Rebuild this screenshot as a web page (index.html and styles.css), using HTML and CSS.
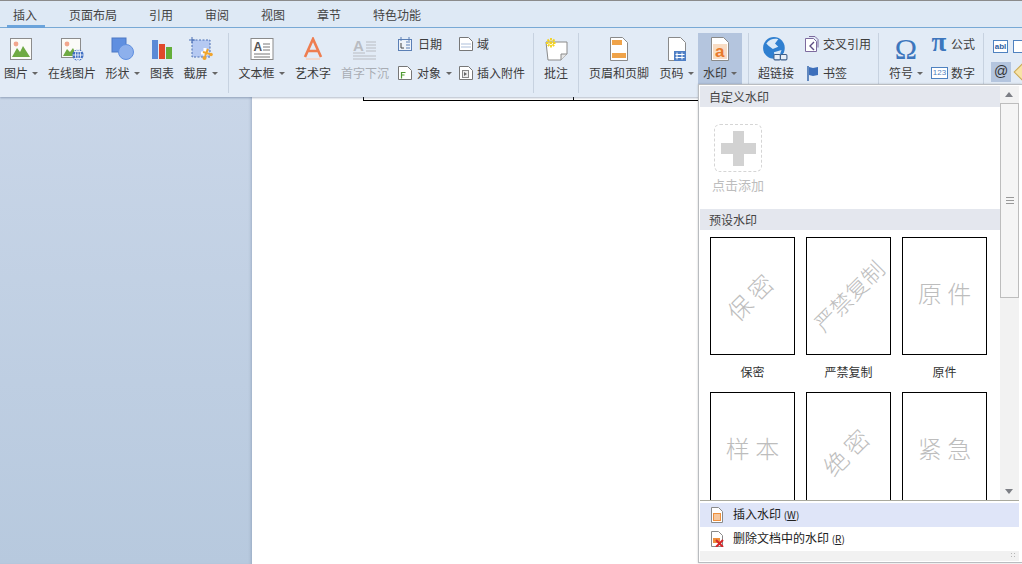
FILE: index.html
```html
<!DOCTYPE html>
<html lang="zh">
<head>
<meta charset="utf-8">
<title>插入水印</title>
<link rel="stylesheet" href="styles.css">
</head>
<body>
<div class="app">
  <nav class="tabs">
    <span class="tab active">插入</span><span class="tab">页面布局</span><span class="tab">引用</span><span class="tab">审阅</span><span class="tab">视图</span><span class="tab">章节</span><span class="tab">特色功能</span>
  </nav>
  <div class="ribbon">
    <div class="tool w42">
      <svg class="ico" viewBox="0 0 24 24"><rect x="1.500" y="1.500" width="21" height="21" fill="#fbfbf8" stroke="#8c8c8c"/><circle cx="7" cy="7" r="2.400" fill="#f2a78e"/><path d="M3 20l5-9 3 4 3-6 7 11z" fill="#6faa43"/></svg>
      <span class="lbl">图片<i class="arr"></i></span>
    </div>
    <div class="tool w60">
      <svg class="ico" viewBox="0 0 24 24"><rect x="1.500" y="1.500" width="19" height="19" fill="#fbfbf8" stroke="#8c8c8c"/><circle cx="7" cy="7" r="2.400" fill="#f2a78e"/><path d="M3 19l4-7 3 3 3-4 4 8z" fill="#6faa43"/><circle cx="18" cy="18" r="5.600" fill="#3f6fc4"/><path d="M12.500 18h11M18 12.500v11M14 14.500h8M14 21.500h8" stroke="#fff" stroke-width=".8"/><ellipse cx="18" cy="18" rx="2.600" ry="5.500" fill="none" stroke="#fff" stroke-width=".8"/></svg>
      <span class="lbl">在线图片</span>
    </div>
    <div class="tool w41">
      <svg class="ico" viewBox="0 0 24 24"><rect x="1" y="1" width="14" height="14" fill="#5f8fe0" stroke="#4c78c4"/><circle cx="15" cy="15" r="7.500" fill="#8db0ec" stroke="#5f8fe0"/></svg>
      <span class="lbl">形状<i class="arr"></i></span>
    </div>
    <div class="tool w38">
      <svg class="ico" viewBox="0 0 24 24"><rect x="2" y="3" width="6" height="19" fill="#5b8ad6"/><rect x="9" y="7" width="6" height="15" fill="#e0492c"/><rect x="16" y="10" width="6" height="12" fill="#63ae3a"/></svg>
      <span class="lbl">图表</span>
    </div>
    <div class="tool w39">
      <svg class="ico" viewBox="0 0 24 24"><rect x="3" y="3" width="18" height="17" fill="#b5c9f2" stroke="#4b6fb5" stroke-dasharray="2 1.500"/><path d="M3 0v6M0 3h6" stroke="#4b6fb5"/><path d="M16 11v8M12 16h8" stroke="#fff" stroke-width="3"/><path d="M19 12l-3 7M14 15l7 2" stroke="#f0a52e" stroke-width="2"/><circle cx="15.500" cy="21" r="2" fill="#f0a52e"/><circle cx="22" cy="17.500" r="1.800" fill="#f0a52e"/></svg>
      <span class="lbl">截屏<i class="arr"></i></span>
    </div>
    <div class="sep m-l8"></div>
    <div class="tool w65">
      <svg class="ico" viewBox="0 0 24 24"><rect x="1" y="1.500" width="22" height="21" fill="#fff" stroke="#8a8a8a"/><text class="ico-a" x="3.500" y="14">A</text><path d="M13 7h7M13 10h7M13 13h7M4 17h16M4 20h16" stroke="#777"/></svg>
      <span class="lbl">文本框<i class="arr"></i></span>
    </div>
    <div class="tool w38">
      <svg class="ico" viewBox="0 0 24 24"><path d="M4 20L12 2l8 18M7 14h10" fill="none" stroke="#ee7d50" stroke-width="2.600"/><path d="M5 22h14" stroke="#f5d0bf" stroke-width="1.500"/></svg>
      <span class="lbl">艺术字</span>
    </div>
    <div class="tool w66 dim">
      <svg class="ico" viewBox="0 0 24 24"><text class="ico-b" x="0" y="14">A</text><path d="M0 16h12M13 5h10M13 8h10M13 11h10M13 14h10M0 19h23M0 22h23" stroke="#b9bcc2"/></svg>
      <span class="lbl">首字下沉</span>
    </div>
    <div class="smalls w61">
      <div class="small">
        <svg class="sic" viewBox="0 0 14 14"><rect x=".5" y="2.500" width="13" height="11" fill="#eef3fa" stroke="#5b7fb5"/><path d="M3 0v4M11 0v4M8 5h4M8 8h4M8 11h4" stroke="#5b7fb5"/><path d="M3 6v5h3" fill="none" stroke="#444"/></svg>
        <span class="txt mw6">日期</span>
      </div>
      <div class="small">
        <svg class="sic" viewBox="0 0 14 14"><path d="M.5.5h9l4 4v9h-13z" fill="#fff" stroke="#777"/><path d="M3.500 12.500v-6h4M3.500 9h3" fill="none" stroke="#4f9a30" stroke-width="1.200"/></svg>
        <span class="txt mw5">对象</span><i class="arr"></i>
      </div>
    </div>
    <div class="smalls w66">
      <div class="small">
        <svg class="sic" viewBox="0 0 14 14"><path d="M.5.5h9l4 4v9h-13z" fill="#fff" stroke="#777"/><path d="M2.500 7h9M2.500 10h9" stroke="#5b7fb5" stroke-dasharray="1 1"/></svg>
        <span class="txt mw4">域</span>
      </div>
      <div class="small">
        <svg class="sic" viewBox="0 0 14 14"><path d="M.5.5h9l4 4v9h-13z" fill="#fff" stroke="#777"/><rect x="3.500" y="4.500" width="6" height="7" fill="#eee" stroke="#888"/><path d="M5 6v4l3-2z" fill="#666"/></svg>
        <span class="txt mw4">插入附件</span>
      </div>
    </div>
    <div class="sep m-l8"></div>
    <div class="tool w44">
      <svg class="ico" viewBox="0 0 24 24"><path d="M2 5h21v12l-6 6H4z" fill="#fff" stroke="#8a8a8a"/><path d="M17 23v-6h6" fill="#e6e6e6" stroke="#8a8a8a"/><path d="M7 1v10M2 6h10M3.500 2.500l7 7M10.500 2.500l-7 7" stroke="#f3d21f" stroke-width="1.800" stroke-dasharray="2.500 1"/></svg>
      <span class="lbl">批注</span>
    </div>
    <div class="sep"></div>
    <div class="tool w80">
      <svg class="ico" viewBox="0 0 24 24"><path d="M3.500.5h12l5 5v18h-17z" fill="#fff" stroke="#8a8a8a"/><rect x="5" y="3" width="10" height="5" fill="#f0a349"/><rect x="5" y="16" width="14" height="5" fill="#f0a349"/></svg>
      <span class="lbl">页眉和页脚</span>
    </div>
    <div class="tool w35">
      <svg class="ico" viewBox="0 0 24 24"><path d="M3.500.5h12l5 5v18h-17z" fill="#fff" stroke="#8a8a8a"/><rect x="9" y="14" width="12" height="10" fill="#4f7fc5"/><path d="M12 15.500v7M17 15.500v7M10.500 17.500h9M10.500 20.500h9" stroke="#fff"/></svg>
      <span class="lbl">页码<i class="arr"></i></span>
    </div>
    <div class="tool w44 on">
      <svg class="ico" viewBox="0 0 24 24"><path d="M3.500.5h12l5 5v18h-17z" fill="#fff" stroke="#8a8a8a"/><rect x="5" y="7" width="14" height="15" fill="#f8dcc4"/><text class="ico-w" x="7" y="19.500">a</text></svg>
      <span class="lbl">水印<i class="arr"></i></span>
    </div>
    <div class="sep m-l6"></div>
    <div class="tool w54">
      <svg class="ico globe" viewBox="0 0 24 24"><circle cx="11" cy="11" r="10" fill="#2f7fd0"/><path d="M4 7c3-4 7-5 11-4l-3 4 3 3-5 2-4-3zM11 15l7-2-2 6-4 1z" fill="#dbe9f7"/><rect x="11" y="17" width="6" height="5" rx="1" fill="#e8eff8" stroke="#3d5f8a"/><rect x="17" y="17" width="6" height="5" rx="1" fill="#e8eff8" stroke="#3d5f8a"/></svg>
      <span class="lbl">超链接</span>
    </div>
    <div class="smalls w75">
      <div class="small">
        <svg class="sic2" viewBox="0 0 16 16"><path d="M2.500 2.500h8l3 3v10h-11z" fill="#fff" stroke="#7d6a9e"/><path d="M6 .5h6l3 3v8" fill="none" stroke="#7d6a9e"/><path d="M11 6L7 10l4 4" fill="none" stroke="#5e4d83" stroke-width="1.400"/></svg>
        <span class="txt mw4">交叉引用</span>
      </div>
      <div class="small">
        <svg class="sic2 flagico" viewBox="0 0 16 16"><path d="M3 1v15" stroke="#2c5fa8" stroke-width="1.400"/><path d="M4 2l4 1 5-1v8l-5 1-4-1z" fill="#3d6fbb"/></svg>
        <span class="txt mw4">书签</span>
      </div>
    </div>
    <div class="sep"></div>
    <div class="tool w52 sym">
      <span class="omega">Ω</span>
      <span class="lbl">符号<i class="arr"></i></span>
    </div>
    <div class="smalls w52">
      <div class="small">
        <span class="pi">π</span>
        <span class="txt">公式</span>
      </div>
      <div class="small">
        <span class="num">123</span>
        <span class="txt">数字</span>
      </div>
    </div>
    <div class="sep"></div>
    <div class="edge">
      <div class="edge-row">
        <span class="form-a">abl</span><span class="form-b"></span>
      </div>
      <div class="edge-row">
        <span class="at">@</span><span class="eraser"></span>
      </div>
    </div>
  </div>
  <main class="doc">
    <aside class="side"></aside>
    <section class="page">
      <div class="frag"><div class="frag-cell"></div></div>
    </section>
  </main>

  <div class="menu">
    <div class="menu-top">
      <div class="gallery">
        <div class="head">自定义水印</div>
        <div class="custom">
          <div class="addbox"><span class="plus"></span></div>
          <div class="addtxt">点击添加</div>
        </div>
        <div class="head">预设水印</div>
        <div class="grid">
          <figure class="cell"><div class="thumb"><span class="wm diag">保&nbsp;密</span></div><figcaption>保密</figcaption></figure>
          <figure class="cell"><div class="thumb"><span class="wm diag tight">严禁复制</span></div><figcaption>严禁复制</figcaption></figure>
          <figure class="cell"><div class="thumb"><span class="wm">原&nbsp;件</span></div><figcaption>原件</figcaption></figure>
          <figure class="cell"><div class="thumb"><span class="wm">样&nbsp;本</span></div></figure>
          <figure class="cell"><div class="thumb"><span class="wm diag">绝&nbsp;密</span></div></figure>
          <figure class="cell"><div class="thumb"><span class="wm">紧&nbsp;急</span></div></figure>
        </div>
      </div>
      <div class="scroll">
        <div class="up"></div>
        <div class="thumbbar"><span class="grip"></span></div>
        <div class="track"></div>
        <div class="down"></div>
      </div>
    </div>
    <div class="menu-list">
      <div class="item hover">
        <svg class="mic" viewBox="0 0 14 16"><path d="M1.500.5h7l4 4v11h-11z" fill="#fff" stroke="#8a8a8a"/><rect x="3" y="6" width="8" height="8" fill="#ee8f3c"/><path d="M4 8h6M4 10h6M4 12h6" stroke="#fff"/></svg>
        <span>插入水印 <small class="key">(<u>W</u>)</small></span>
      </div>
      <div class="item">
        <svg class="mic" viewBox="0 0 14 16"><path d="M1.500.5h7l4 4v11h-11z" fill="#fff" stroke="#8a8a8a"/><rect x="3" y="7" width="7" height="5" fill="#ee8f3c"/><path d="M6 9l7 7M13 9l-7 7" stroke="#d6262a" stroke-width="2"/></svg>
        <span>删除文档中的水印 <small class="key">(<u>R</u>)</small></span>
      </div>
    </div>
    <div class="status"><span class="gripper"></span></div>
  </div>
</div>
</body>
</html>
```

FILE: styles.css
```css
* { box-sizing: border-box; }
html, body { margin: 0; padding: 0; overflow: hidden; }
body { font: 12px/16px "Noto Sans CJK SC", "Liberation Sans", sans-serif; color: #3c3c3c; }
.app { position: relative; width: 1022px; height: 564px; display: flex; flex-direction: column; overflow: hidden; background: #fff; }

.tabs { height: 28px; flex: none; display: flex; gap: 32px; padding: 6px 0 0 13px; background: #dee9f5; border-top: 1px solid #8b8b8b; border-bottom: 1px solid #7aacd8; }
.tab { position: relative; height: 16px; color: #444; }
.tab.active::after { content: ""; position: absolute; left: -6px; right: -8px; top: 18px; height: 3px; background: #6ba4dc; }

.ribbon { height: 69px; flex: none; display: flex; background: #e2ebf6; box-shadow: 0 1px 2px rgba(80,100,130,.45); position: relative; z-index: 1; }
.tool { flex: none; display: flex; flex-direction: column; align-items: center; justify-content: flex-start; padding-top: 9px; height: 56px; margin-top: 5px; }
.lbl { margin-top: 1px; display: flex; align-items: center; height: 22px; white-space: nowrap; }
.ico { width: 24px; height: 24px; display: block; margin-top: -5px; }
.w35 { width: 35px; } .w38 { width: 38px; } .w39 { width: 39px; } .w41 { width: 41px; } .w42 { width: 42px; } .w44 { width: 44px; } .w52 { width: 52px; } .w54 { width: 54px; } .w60 { width: 60px; } .w61 { width: 61px; } .w65 { width: 65px; } .w66 { width: 66px; } .w75 { width: 75px; } .w80 { width: 80px; }
.dim { color: #a9adb4; }
.on { background: #b4c5de; margin-left: 4px; height: 51px; }
.arr { display: inline-block; width: 0; height: 0; margin-left: 4px; border: 3px solid transparent; border-top: 3px solid #666; border-bottom: 0; }

.sep { flex: none; width: 1px; height: 60px; margin-top: 5px; background: #c7d2e0; }
.m-l8 { margin-left: 8px; }
.m-l6 { margin-left: 6px; }

.smalls { flex: none; display: flex; flex-direction: column; gap: 5px; padding-top: 4px; }
.small { display: flex; align-items: center; height: 24px; white-space: nowrap; }
.sic { width: 14px; height: 14px; flex: none; }
.sic2 { width: 16px; height: 16px; flex: none; }
.flagico { margin-left: 2px; margin-right: -2px; }
.txt { flex: none; }
.mw6 { margin-left: 6px; }
.mw5 { margin-left: 5px; }
.mw4 { margin-left: 4px; }
.small .arr { margin-left: 5px; }

.ico-a { font: 700 12px "Liberation Sans", sans-serif; fill: #555; }
.ico-b { font: 700 15px "Liberation Sans", sans-serif; fill: #b9bcc2; }
.ico-w { font: 700 17px "Liberation Sans", sans-serif; fill: #e8792b; }
.globe { width: 26px; height: 26px; margin: -6px 2px -1px 0; }

.sym { width: 54px; margin-right: -2px; }
.omega { display: block; font: 30px/26px "Liberation Serif", serif; color: #3d76bd; height: 24px; margin: -6px 0 1px; }
.pi { width: 16px; height: 20px; font: 700 27px/18px "Liberation Serif", serif; color: #3d76bd; text-align: center; margin-right: 4px; margin-top: -3px; }
.num { width: 17px; height: 12px; margin-right: 3px; border: 1px solid #4f82c0; background: #fff; color: #4f82c0; font: 8px/10px "Liberation Sans", sans-serif; text-align: center; }

.edge { flex: none; margin-left: 9px; display: flex; flex-direction: column; gap: 10px; padding-top: 10px; }
.edge-row { display: flex; align-items: center; gap: 3px; height: 16px; }
.form-a { width: 15px; height: 13px; border: 1px solid #4f82c0; background: #fff; color: #2f5f9f; font: 700 8px/11px "Liberation Sans", sans-serif; text-align: center; }
.form-b { width: 15px; height: 13px; margin-left: 2px; border: 1px solid #4f82c0; background: #fff; }
.at { width: 20px; height: 20px; margin-left: -2px; background: #b4c5de; color: #333; font: 14px/19px "Liberation Sans", sans-serif; text-align: center; }
.eraser { width: 12px; height: 12px; background: #f7e3a6; border: 1px solid #c9a95a; transform: rotate(45deg); margin-left: 2px; }

.doc { flex: 1; display: flex; min-height: 0; }
.side { flex: none; width: 252px; background: linear-gradient(#c9d6e8, #b7c9de); box-shadow: inset -3px 0 3px -2px rgba(90,110,140,.35); }
.page { flex: 1; background: #fff; }
.frag { width: 400px; height: 4px; margin-left: 111px; border-left: 1px solid #000; border-bottom: 1px solid #000; }
.frag-cell { width: 210px; height: 3px; border-right: 1px solid #000; }

.menu { position: absolute; left: 698px; top: 84px; width: 324px; height: 479px; z-index: 5; display: flex; flex-direction: column; padding: 1px 3px 1px 1px; background: #fff; border: 1px solid #b9bcc0; border-right: 0; box-shadow: 0 0 2px rgba(0,0,0,.2); }
.menu-top { flex: none; height: 415px; display: flex; border-bottom: 1px solid #a9a99e; }
.gallery { width: 300px; flex: none; overflow: hidden; }
.head { height: 21px; padding-left: 9px; line-height: 21px; background: #e4e7ee; color: #444; }
.custom { height: 102px; padding: 17px 0 0 14px; }
.addbox { width: 48px; height: 48px; border: 1px dashed #d5d5d5; border-radius: 6px; display: flex; align-items: center; justify-content: center; }
.plus { width: 35px; height: 35px; background: linear-gradient(#d2d2d2, #d2d2d2) center / 35px 11px no-repeat, linear-gradient(#d2d2d2, #d2d2d2) center / 11px 35px no-repeat; }
.addtxt { margin: 5px 0 0 -2px; width: 52px; font-size: 13px; white-space: nowrap; color: #bdbdbd; text-align: center; }
.grid { display: grid; grid-template-columns: repeat(3, 85px); column-gap: 11px; row-gap: 12px; padding: 7px 0 0 10px; }
.cell { margin: 0; }
.thumb { width: 85px; height: 118px; padding-bottom: 6px; border: 1px solid #000; background: #fff; display: flex; align-items: center; justify-content: center; }
.cell figcaption { margin-top: 9px; height: 16px; text-align: center; color: #333; }
.wm { font-size: 24px; line-height: 28px; font-weight: 300; color: #bdbdbd; white-space: nowrap; }
.diag { transform: translate(-3px, 4px) rotate(-45deg); }
.tight { font-size: 22px; transform: translate(-1px, 2px) rotate(-45deg); }

.scroll { width: 19px; flex: none; margin-left: 0; display: flex; flex-direction: column; background: #f2f2f2; }
.up, .down { height: 17px; flex: none; position: relative; }
.up::after, .down::after { content: ""; position: absolute; left: 5px; top: 6px; border: 4px solid transparent; }
.up::after { border-bottom: 5px solid #7d7f85; border-top: 0; }
.down::after { border-top: 5px solid #7d7f85; border-bottom: 0; }
.thumbbar { height: 195px; flex: none; background: #f5f5f5; border: 1px solid #bdbdbd; display: flex; align-items: center; justify-content: center; }
.grip { width: 8px; height: 7px; border-top: 1px solid #999; border-bottom: 1px solid #999; background: linear-gradient(#999, #999) center / 8px 1px no-repeat; }
.track { flex: 1; }

.menu-list { padding-top: 2px; flex: none; }
.item { height: 24px; display: flex; align-items: center; padding: 0 0 1px 10px; color: #222; }
.item.hover { background: #dfe5f8; }
.item span { margin-left: 9px; }
.key { font-size: 10px; }
.mic { width: 14px; height: 16px; flex: none; }
.status { flex: 1; background: #f1f1f1; position: relative; }
.gripper { position: absolute; right: 2px; bottom: 2px; width: 7px; height: 7px; background: radial-gradient(circle, #b5b5b5 1px, transparent 1px) 0 0 / 3px 3px; }
```
